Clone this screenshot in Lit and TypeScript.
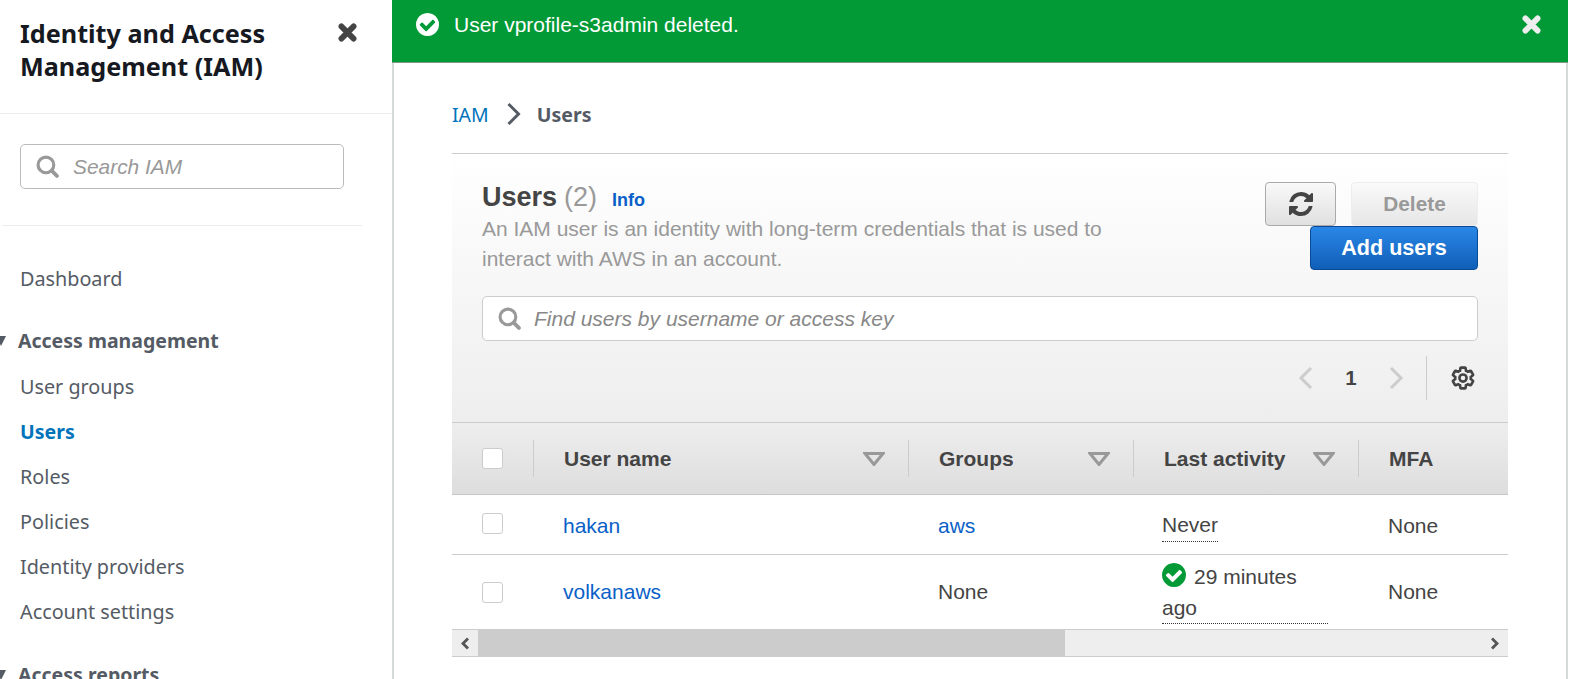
import { LitElement, css, html, svg } from "lit";
import { customElement } from "lit/decorators.js";

const CHECK_CIRCLE = svg`<path d="M1412 734q0-28-18-46l-91-90q-19-19-45-19t-45 19l-408 407-226-226q-19-19-45-19t-45 19l-91 90q-18 18-18 46 0 27 18 45l362 362q19 19 45 19 27 0 46-19l543-543q18-18 18-45zm252 162q0 209-103 385.500t-279.500 279.500-385.500 103-385.500-103-279.500-279.500-103-385.500 103-385.500 279.500-279.500 385.500-103 385.500 103 279.500 279.500 103 385.500z"/>`;
const REFRESH = svg`<path d="M1639 1056q0 5-1 7-64 268-268 434.500t-478 166.500q-146 0-282.500-55t-243.500-157l-129 129q-19 19-45 19t-45-19-19-45v-448q0-26 19-45t45-19h448q26 0 45 19t19 45-19 45l-137 137q71 66 161 102t187 36q134 0 250-65t186-179q11-17 53-117 8-23 30-23h192q13 0 22.500 9.500t9.500 22.500zm25-800v448q0 26-19 45t-45 19h-448q-26 0-45-19t-19-45 19-45l138-138q-148-137-349-137-134 0-250 65t-186 179q-11 17-53 117-8 23-30 23h-199q-13 0-22.500-9.500t-9.500-22.500v-7q65-268 270-434.500t480-166.500q146 0 284 55.500t245 156.500l130-129q19-19 45-19t45 19 19 45z"/>`;
const GEAR = "M19.14 12.94c.04-.3.06-.61.06-.94 0-.32-.02-.64-.07-.94l2.03-1.58c.18-.14.23-.41.12-.61l-1.92-3.32c-.12-.22-.37-.29-.59-.22l-2.39.96c-.5-.38-1.03-.7-1.62-.94l-.36-2.54c-.04-.24-.24-.41-.48-.41h-3.84c-.24 0-.43.17-.47.41l-.36 2.54c-.59.24-1.13.57-1.62.94l-2.39-.96c-.22-.08-.47 0-.59.22L2.74 8.87c-.12.21-.08.47.12.61l2.03 1.58c-.05.3-.09.63-.09.94s.02.64.07.94l-2.03 1.58c-.18.14-.23.41-.12.61l1.92 3.32c.12.22.37.29.59.22l2.39-.96c.5.38 1.03.7 1.62.94l.36 2.54c.05.24.24.41.48.41h3.84c.24 0 .44-.17.47-.41l.36-2.54c.59-.24 1.13-.56 1.62-.94l2.39.96c.22.08.47 0 .59-.22l1.92-3.32c.12-.22.07-.47-.12-.61l-2.01-1.58z";

const closeIcon = (cls: string) => html`<svg class=${cls} viewBox="0 0 18 18">
  <path d="M3.2 3.2 14.8 14.8M14.8 3.2 3.2 14.800" fill="none" stroke="currentColor" stroke-width="5.4" stroke-linecap="round" />
</svg>`;

const searchIcon = html`<svg class="search-icon" viewBox="0 0 22 22">
  <circle cx="9.500" cy="9.500" r="7.500" fill="none" stroke="currentColor" stroke-width="3" />
  <path d="M15 15 20 20" stroke="currentColor" stroke-width="3.600" stroke-linecap="round" />
</svg>`;

const chevron = (cls: string, points: string) => html`<svg class=${cls} viewBox="0 0 16 26">
  <polyline points=${points} fill="none" stroke="currentColor" stroke-width="3" />
</svg>`;

const sortCaret = html`<svg class="caret" viewBox="0 0 22 14">
  <path d="M2 1.500H20L11 12.500Z" fill="none" stroke="#999" stroke-width="3" />
</svg>`;

@customElement("app-root")
export class AppRoot extends LitElement {
  static styles = css`
    :host {
      display: flex;
      height: 100vh;
      width: 100%;
      overflow: hidden;
      background: #fff;
      font-family: "Liberation Sans", Arial, sans-serif;
      font-size: 21px;
      color: #444;
    }

    .sidebar {
      width: 392px;
      flex: none;
      box-sizing: border-box;
      font-family: "Noto Sans", sans-serif;
      font-size: 19.800px;
      color: #545b64;
      overflow: hidden;
    }

    .side-head {
      display: flex;
      justify-content: space-between;
      box-sizing: border-box;
      height: 114px;
      padding: 17px 35px 0 20px;
      border-bottom: 1px solid #eaeded;
    }

    .side-title {
      font-size: 25.200px;
      font-weight: 700;
      line-height: 33px;
      color: #16191f;
    }

    .side-close {
      width: 19px;
      height: 19px;
      margin-top: 6px;
      color: #444;
    }

    .side-search {
      display: flex;
      align-items: center;
      gap: 14px;
      box-sizing: border-box;
      width: 324px;
      height: 45px;
      margin: 30px 0 36px 20px;
      padding-left: 15px;
      border: 1px solid #bbb;
      border-radius: 5px;
      font-family: "Liberation Sans", Arial, sans-serif;
      font-style: italic;
      font-size: 20.900px;
      color: #999;
    }

    .search-icon {
      width: 23px;
      height: 23px;
      flex: none;
      color: #999;
    }

    .side-rule {
      width: 360px;
      height: 1px;
      margin-left: 2px;
      background: #eaeded;
    }

    .nav {
      padding-top: 30px;
    }

    .nav-item {
      height: 45px;
      line-height: 45px;
      padding-left: 20px;
      white-space: nowrap;
    }

    .nav-item.active {
      color: #0073bb;
      font-weight: 700;
      font-size: 19.500px;
    }

    .nav-section {
      display: flex;
      align-items: center;
      height: 45px;
      margin: 17px 0 1px;
      font-weight: 700;
      font-size: 19.500px;
      white-space: nowrap;
    }

    .nav-section.next {
      margin-top: 18px;
    }

    .nav-section i {
      width: 0;
      height: 0;
      margin: 0 12px 0 -4px;
      border-left: 5.500px solid transparent;
      border-right: 5.500px solid transparent;
      border-top: 10px solid #545b64;
    }

    .main {
      display: flex;
      flex-direction: column;
      width: 1176px;
      flex: none;
      height: 100%;
      overflow: hidden;
    }

    .flash {
      display: flex;
      align-items: center;
      flex: none;
      box-sizing: border-box;
      height: 63px;
      padding: 0 27px 0 24px;
      background: #019a37;
      border-bottom: 1px solid #7a9a85;
      color: #fff;
    }

    .flash-check {
      width: 23px;
      height: 23px;
      margin-right: 15px;
      margin-top: -13px;
      fill: #fff;
    }

    .flash-text {
      flex: 1;
      margin-top: -13px;
    }

    .flash-close {
      width: 19px;
      height: 19px;
      margin-top: -14px;
      color: #eee;
    }

    .content {
      flex: 1;
      padding: 0 58px;
      border-left: 2px solid #d5dbdb;
      border-right: 2px solid #d5dbdb;
    }

    .crumbs {
      display: flex;
      align-items: center;
      height: 91px;
      padding-top: 12px;
      box-sizing: border-box;
      border-bottom: 1px solid #ccc;
      font-family: "Noto Sans", sans-serif;
      font-size: 19.500px;
      color: #0073bb;
    }

    .crumbs b {
      color: #545b64;
    }

    .crumb-sep {
      width: 17px;
      height: 26px;
      margin: 0 15px 0 16px;
      color: #545b64;
    }

    .panel {
      padding: 28px 30px 22px;
      background: linear-gradient(#fff, #eee);
      border-bottom: 1px solid #ccc;
    }

    .panel-top {
      display: flex;
      justify-content: space-between;
      align-items: flex-start;
    }

    .heading {
      display: flex;
      align-items: baseline;
      height: 32px;
      line-height: 32px;
      margin-top: -1px;
    }

    .heading b {
      font-size: 27px;
      color: #444;
    }

    .heading .count {
      font-size: 27px;
      color: #999;
      margin-left: 7px;
    }

    .heading a {
      font-size: 18px;
      font-weight: 700;
      color: #0a5fc8;
      margin-left: 15px;
    }

    .desc {
      width: 660px;
      margin-top: 1px;
      line-height: 30px;
      color: #999;
    }

    .actions {
      display: flex;
      flex-wrap: wrap;
      justify-content: flex-end;
      width: 215px;
    }

    .btn {
      box-sizing: border-box;
      height: 44px;
      border-radius: 4px;
      display: flex;
      align-items: center;
      justify-content: center;
      font-weight: 700;
      font-size: 20.800px;
    }

    .btn.refresh {
      width: 71px;
      margin-right: 15px;
      border: 1px solid #aaa;
      background: linear-gradient(#f9f9f9, #e0e0e0);
    }

    .btn.refresh svg {
      width: 24px;
      height: 24px;
      fill: #444;
    }

    .btn.delete {
      width: 127px;
      border: 1px solid #eee;
      background: linear-gradient(#fafafa, #e6e6e6);
      color: #999;
    }

    .btn.primary {
      width: 168px;
      border: 1px solid #0b4a94;
      background: linear-gradient(#2a87e6, #105fb8);
      color: #fff;
      font-size: 21.600px;
    }

    .filter {
      display: flex;
      align-items: center;
      gap: 13px;
      box-sizing: border-box;
      height: 45px;
      margin-top: 22px;
      padding-left: 15px;
      border: 1px solid #ccc;
      border-radius: 5px;
      background: #fff;
      font-style: italic;
      color: #888;
    }

    .pager {
      display: flex;
      align-items: center;
      justify-content: flex-end;
      height: 44px;
      margin-top: 15px;
    }

    .pager-arrow {
      width: 16px;
      height: 26px;
      color: #ccc;
    }

    .pager-num {
      width: 74px;
      text-align: center;
      font-size: 20.500px;
      font-weight: 700;
    }

    .pager-rule {
      width: 1px;
      height: 44px;
      margin: 0 23px 0 22px;
      background: #ccc;
    }

    .gear {
      width: 26px;
      height: 26px;
      margin-right: 2px;
      fill: none;
      stroke: #444;
      stroke-width: 2.400;
    }

    .grid {
      display: grid;
      grid-template-columns: 82px 375px 225px 225px 149px;
      align-items: center;
    }

    .thead {
      height: 72px;
      background: linear-gradient(#eee, #ddd);
      border-bottom: 1px solid #c6c6c6;
      box-sizing: border-box;
      font-weight: 700;
    }

    .th {
      display: flex;
      align-items: center;
      justify-content: space-between;
      box-sizing: border-box;
      height: 37px;
      padding: 0 23px 0 30px;
      border-right: 1px solid #ccc;
    }

    .th.check {
      padding: 0;
    }

    .th.last {
      border-right: 0;
    }

    .caret {
      width: 22px;
      height: 14px;
      flex: none;
    }

    .box {
      box-sizing: border-box;
      width: 21px;
      height: 21px;
      border: 1px solid #ccc;
      border-radius: 3px;
      background: #fff;
      margin-left: 30px;
    }

    .td {
      padding-left: 29px;
    }

    .row {
      box-sizing: border-box;
      border-bottom: 1px solid #ccc;
    }

    .row.one {
      height: 60px;
    }

    .row.one .td {
      padding-top: 2px;
    }

    .row.one .box {
      margin-top: -2px;
    }

    .row.two {
      height: 74px;
      border-bottom: 0;
    }

    .td a {
      color: #0a5fc8;
    }

    .dotted {
      display: inline-block;
      line-height: 26px;
      border-bottom: 1px dotted #333;
      padding-bottom: 3px;
      margin: 2px 0 0 -1px;
    }

    .activity {
      line-height: 31px;
    }

    .activity-wrap {
      display: block;
      width: 166px;
      border-bottom: 1px dotted #333;
      margin-left: -1px;
    }

    .activity svg {
      width: 24px;
      height: 24px;
      fill: #019a37;
      vertical-align: -3px;
      margin-right: 8px;
    }

    .scrollbar {
      display: flex;
      height: 28px;
      box-sizing: border-box;
      background: #eee;
      border-top: 1px solid #ccc;
      border-bottom: 1px solid #ccc;
      color: #555;
    }

    .scroll-btn {
      display: flex;
      align-items: center;
      justify-content: center;
      width: 26px;
      flex: none;
    }

    .scroll-btn svg {
      width: 10px;
      height: 13px;
    }

    .thumb {
      width: 587px;
      background: #ccc;
      margin-top: -1px;
      margin-bottom: -1px;
    }

    .scroll-space {
      flex: 1;
    }
  `;

  render() {
    return html`
      <aside class="sidebar">
        <div class="side-head">
          <div class="side-title">Identity and Access<br />Management (IAM)</div>
          ${closeIcon("side-close")}
        </div>
        <div class="side-search">${searchIcon}<span>Search IAM</span></div>
        <div class="side-rule"></div>
        <nav class="nav">
          <div class="nav-item">Dashboard</div>
          <div class="nav-section"><i></i>Access management</div>
          <div class="nav-item">User groups</div>
          <div class="nav-item active">Users</div>
          <div class="nav-item">Roles</div>
          <div class="nav-item">Policies</div>
          <div class="nav-item">Identity providers</div>
          <div class="nav-item">Account settings</div>
          <div class="nav-section next"><i></i>Access reports</div>
        </nav>
      </aside>
      <main class="main">
        <div class="flash">
          <svg class="flash-check" viewBox="128 128 1536 1536">${CHECK_CIRCLE}</svg>
          <span class="flash-text">User vprofile-s3admin deleted.</span>
          ${closeIcon("flash-close")}
        </div>
        <div class="content">
          <div class="crumbs">
            <span>IAM</span>
            ${chevron("crumb-sep", "3,3 13,13 3,23")}
            <b>Users</b>
          </div>
          <section class="panel">
            <div class="panel-top">
              <div>
                <div class="heading"><b>Users</b><span class="count">(2)</span><a>Info</a></div>
                <div class="desc">
                  An IAM user is an identity with long-term credentials that is used to interact with AWS in an account.
                </div>
              </div>
              <div class="actions">
                <div class="btn refresh"><svg viewBox="128 128 1536 1536">${REFRESH}</svg></div>
                <div class="btn delete">Delete</div>
                <div class="btn primary">Add users</div>
              </div>
            </div>
            <div class="filter">${searchIcon}<span>Find users by username or access key</span></div>
            <div class="pager">
              ${chevron("pager-arrow", "13,3 3,13 13,23")}
              <span class="pager-num">1</span>
              ${chevron("pager-arrow", "3,3 13,13 3,23")}
              <span class="pager-rule"></span>
              <svg class="gear" viewBox="0 0 24 24"><path d=${GEAR} /><circle cx="12" cy="12" r="3.300" /></svg>
            </div>
          </section>
          <div class="grid thead">
            <div class="th check"><span class="box"></span></div>
            <div class="th"><span>User name</span>${sortCaret}</div>
            <div class="th"><span>Groups</span>${sortCaret}</div>
            <div class="th"><span>Last activity</span>${sortCaret}</div>
            <div class="th last"><span>MFA</span></div>
          </div>
          <div class="grid row one">
            <span class="box"></span>
            <div class="td"><a>hakan</a></div>
            <div class="td"><a>aws</a></div>
            <div class="td"><span class="dotted">Never</span></div>
            <div class="td">None</div>
          </div>
          <div class="grid row two">
            <span class="box"></span>
            <div class="td"><a>volkanaws</a></div>
            <div class="td">None</div>
            <div class="td activity">
              <span class="activity-wrap"
                ><svg viewBox="128 128 1536 1536">${CHECK_CIRCLE}</svg>29 minutes ago</span
              >
            </div>
            <div class="td">None</div>
          </div>
          <div class="scrollbar">
            <div class="scroll-btn">
              <svg viewBox="0 0 10 13"><polyline points="8,1.500 3,6.500 8,11.500" fill="none" stroke="currentColor" stroke-width="2.800" /></svg>
            </div>
            <div class="thumb"></div>
            <div class="scroll-space"></div>
            <div class="scroll-btn">
              <svg viewBox="0 0 10 13"><polyline points="2,1.500 7,6.500 2,11.500" fill="none" stroke="currentColor" stroke-width="2.800" /></svg>
            </div>
          </div>
        </div>
      </main>
    `;
  }
}
